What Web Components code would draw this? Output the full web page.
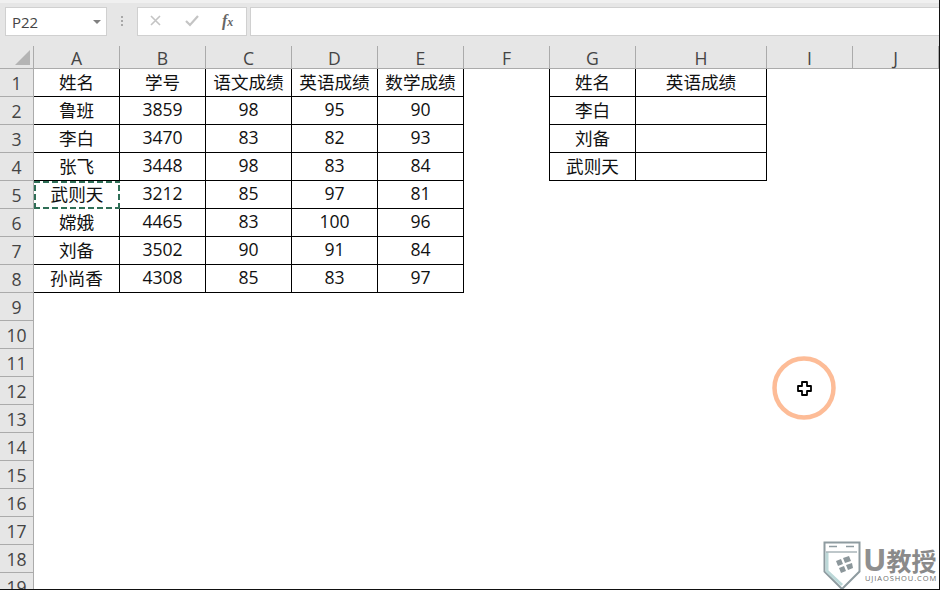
<!DOCTYPE html>
<html lang="zh">
<head>
<meta charset="utf-8">
<title>Sheet</title>
<style>
html, body { margin: 0; height: 100%; overflow: hidden; background: #fff; }
body { font-family: "Liberation Sans", "Noto Sans CJK SC", sans-serif; }
</style>
</head>
<body>
<xl-app></xl-app>
<script>
const FONT = '"Open Sans", "Noto Sans CJK SC", sans-serif';

customElements.define('xl-formula-bar', class extends HTMLElement {
  constructor() {
    super();
    this.attachShadow({ mode: 'open' });
    this.shadowRoot.innerHTML = `
<style>
:host {
  display: flex;
  height: 46px;
  box-sizing: border-box;
  padding: 7px 0 10px 5px;
  background: linear-gradient(#f0f0f0 0 3px, #e6e6e6 3px);
  font-family: ${FONT};
}
.box { background: #fff; border: 1px solid #d0d0d0; box-sizing: border-box; height: 29px; }
.name {
  width: 102px;
  display: flex;
  align-items: center;
  justify-content: space-between;
  padding: 0 5px 0 6px;
  font-size: 15px;
  color: #444;
}
.caret { width: 0; height: 0; border: 4px solid transparent; border-top: 4px solid #808080; border-bottom: 0; }
.dots { width: 30px; display: flex; justify-content: center; align-items: center; }
.btns { width: 110px; display: flex; align-items: center; }
.btns svg { display: block; }
.input { flex: 1; margin-left: 3px; border-right: 0; }
</style>
<div class="box name">P22<span class="caret"></span></div>
<div class="dots"><svg width="3" height="11"><path d="M0 0h2v2H0zM0 4h2v2H0zM0 8h2v2H0z" fill="#a8a8a8"/></svg></div>
<div class="box btns">
  <svg width="108" height="27" viewBox="0 0 108 27">
    <path d="M13 8l9 9M22 8l-9 9" stroke="#c4c4c4" stroke-width="1.6" fill="none"/>
    <path d="M48 13l4 4 8-9" stroke="#c4c4c4" stroke-width="2.2" fill="none"/>
    <text x="84" y="18" font-family="Liberation Serif, serif" font-style="italic" font-weight="bold" font-size="16" fill="#666">f<tspan font-size="12">x</tspan></text>
  </svg>
</div>
<div class="box input"></div>`;
  }
});

customElements.define('xl-sheet', class extends HTMLElement {
  constructor() {
    super();
    this.attachShadow({ mode: 'open' });
    const widths = [34, 86, 86, 86, 86, 86, 86, 86, 131, 86, 86, 60];
    const names = ['', 'A', 'B', 'C', 'D', 'E', 'F', 'G', 'H', 'I', 'J', ''];
    const rows = {
      1: ['姓名', '学号', '语文成绩', '英语成绩', '数学成绩', '', '姓名', '英语成绩'],
      2: ['鲁班', '3859', '98', '95', '90', '', '李白', ''],
      3: ['李白', '3470', '83', '82', '93', '', '刘备', ''],
      4: ['张飞', '3448', '98', '83', '84', '', '武则天', ''],
      5: ['武则天', '3212', '85', '97', '81'],
      6: ['嫦娥', '4465', '83', '100', '96'],
      7: ['刘备', '3502', '90', '91', '84'],
      8: ['孙尚香', '4308', '85', '83', '97']
    };
    let html = '<div class="corner"><svg width="15" height="15"><path d="M15 0v15H0z" fill="#b4b4b4"/></svg></div>';
    for (let c = 1; c < names.length; c++) {
      html += `<div class="colh">${names[c]}</div>`;
    }
    for (let r = 1; r <= 19; r++) {
      html += `<div class="rowh">${r}</div>`;
      const data = rows[r] || [];
      for (let c = 1; c < names.length; c++) {
        const text = data[c - 1];
        let cls = 'cell';
        // first table is A:E rows 1-8, second is G:H rows 1-4
        if (r <= 8 && c <= 5) cls += ' t';
        if (r <= 4 && (c === 7 || c === 8)) cls += ' t';
        // left edge of the second table sits on F's right side
        if (r <= 4 && c === 6) cls += ' lead';
        if (r === 5 && c === 1) cls += ' copy';
        html += `<div class="${cls}">${text || ''}</div>`;
      }
    }
    this.shadowRoot.innerHTML = `
<style>
:host {
  display: grid;
  grid-template-columns: ${widths.map(w => w + 'px').join(' ')};
  grid-template-rows: 23px repeat(19, 28px);
  background: #fff;
  font-family: ${FONT};
  font-size: 17.6px;
  color: #111;
  height: 544px;
  overflow: hidden;
}
div { box-sizing: border-box; display: flex; align-items: center; justify-content: center; white-space: nowrap; }
.corner {
  background: #e6e6e6;
  border-right: 1px solid #ababab;
  border-bottom: 1px solid #ababab;
  justify-content: flex-end;
  align-items: flex-end;
  padding: 0 3px 3px 0;
}
.colh {
  background: #e6e6e6;
  border-right: 1px solid #ababab;
  border-bottom: 1px solid #ababab;
  color: #444;
  padding-top: 1px;
}
.rowh {
  background: #e6e6e6;
  border-right: 1px solid #ababab;
  border-bottom: 1px solid #ababab;
  color: #444;
}
.cell { position: relative; padding-bottom: 3px; }
.t { border-right: 1px solid #000; border-bottom: 1px solid #000; }
.lead { border-right: 1px solid #000; }
.copy { border: 0; }
.copy::after {
  content: "";
  position: absolute;
  left: 0; top: 0; right: 0; bottom: 0;
  background:
    repeating-linear-gradient(90deg, #2e6e56 0 6px, transparent 6px 9px) left top / 100% 2px no-repeat,
    repeating-linear-gradient(90deg, #2e6e56 0 6px, transparent 6px 9px) left bottom / 100% 2px no-repeat,
    repeating-linear-gradient(0deg, #2e6e56 0 6px, transparent 6px 9px) left top / 2px 100% no-repeat,
    repeating-linear-gradient(0deg, #2e6e56 0 6px, transparent 6px 9px) right top / 2px 100% no-repeat;
}
</style>
${html}`;
  }
});

customElements.define('xl-click-ring', class extends HTMLElement {
  constructor() {
    super();
    this.attachShadow({ mode: 'open' });
    this.shadowRoot.innerHTML = `
<style>
:host { position: absolute; left: 772px; top: 356px; width: 64px; height: 64px; display: block; }
svg { display: block; }
</style>
<svg width="64" height="64" viewBox="0 0 64 64">
  <circle cx="32" cy="32" r="29.5" fill="#fff" stroke="#fdbc97" stroke-width="4.5"/>
  <path d="M30 26h5v4h4v5h-4v4h-5v-4h-4v-5h4z" fill="#fff" stroke="#000" stroke-width="1.8" stroke-linejoin="round"/>
</svg>`;
  }
});

customElements.define('xl-watermark', class extends HTMLElement {
  constructor() {
    super();
    this.attachShadow({ mode: 'open' });
    this.shadowRoot.innerHTML = `
<style>
:host {
  position: absolute;
  right: 0;
  bottom: 0;
  width: 116px;
  height: 48px;
  display: flex;
  align-items: flex-start;
  gap: 4px;
  font-family: ${FONT};
  color: #8a8a8a;
}
svg { display: block; flex: none; }
.txt { display: flex; flex-direction: column; }
.big { font-size: 25px; font-weight: 700; line-height: 25px; margin-top: 6px; white-space: nowrap; }
.big b { font-size: 31px; font-weight: 700; color: #8f8f8f; margin-left: -2px; margin-right: 0; }
.small { font-size: 7.5px; line-height: 9px; white-space: nowrap; color: #6f6f6f; letter-spacing: .9px; }
</style>
<svg width="38" height="48" viewBox="0 0 38 48">
  <path d="M1.5 1.5h35v29L19 48 1.5 30.5z" fill="#fff" stroke="#8e9ba0" stroke-width="2"/>
  <path d="M4 11v19l15 14" fill="none" stroke="#bcd8d8" stroke-width="3"/>
  <path d="M34 11H3" stroke="#a9b4b8" stroke-width="1.5"/>
  <path d="M6 5.500h8M23 5.500h8" stroke="#8e9ba0" stroke-width="1.500"/>
  <path d="M13 20l5-2 2 5-5 2zM20 17l6-2 2 5-6 2zM16 27l5-2 2 5-5 2zM23 24l6-2 1 5-5 2z" fill="#8c979b"/>
</svg>
<div class="txt"><span class="big"><b>U</b>教授</span><span class="small">UJIAOSHOU.COM</span></div>`;
  }
});

customElements.define('xl-app', class extends HTMLElement {
  constructor() {
    super();
    this.attachShadow({ mode: 'open' });
    this.shadowRoot.innerHTML = `
<style>
:host {
  display: block;
  position: relative;
  box-sizing: border-box;
  width: 940px;
  height: 590px;
  overflow: hidden;
  border-right: 1px solid #111;
  border-bottom: 1px solid #111;
}
</style>
<xl-formula-bar></xl-formula-bar>
<xl-sheet></xl-sheet>
<xl-click-ring></xl-click-ring>
<xl-watermark></xl-watermark>`;
  }
});
</script>
</body>
</html>
